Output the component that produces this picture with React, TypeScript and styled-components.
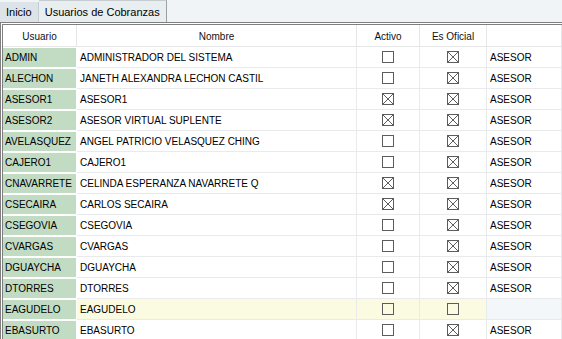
import React from 'react'
import styled, { createGlobalStyle, css } from 'styled-components'

const GlobalStyle = createGlobalStyle`
  html, body {
    margin: 0;
    padding: 0;
    background: #ffffff;
    overflow: hidden;
  }
  body {
    font-family: 'Liberation Sans', Arial, sans-serif;
    color: #000;
  }
`

const COLS = '74px 280px 63px 67px 1fr'

const Screen = styled.div`
  width: 562px;
  height: 339px;
  display: flex;
  flex-direction: column;
  overflow: hidden;
`

const TabBar = styled.div`
  height: 22px;
  display: flex;
  align-items: flex-end;
  background: #f1f4f6;
`

const Tab = styled.div<{ active?: boolean }>(
  props => css`
    display: flex;
    align-items: center;
    font-size: 11px;
    box-sizing: border-box;
    padding: 0 6px;
    height: ${props.active ? '22px' : '20px'};
    background: ${props.active ? '#e9eef1' : '#dde4e9'};
    border-right: 1px solid ${props.active ? '#9aa0a4' : '#c5cbcf'};
    border-top: ${props.active ? '1px solid #c5cbcf' : 'none'};
  `
)

const Frame = styled.div`
  flex: 1;
  display: flex;
  flex-direction: column;
  border-top: 3px double #7f7f7f;
  border-left: 3px double #7f7f7f;
`

const Row = styled.div<{ head?: boolean }>(
  props => css`
    display: grid;
    grid-template-columns: ${COLS};
    height: ${props.head ? '22px' : '21px'};
    flex-shrink: 0;
  `
)

const HeadCell = styled.div`
  display: flex;
  align-items: center;
  justify-content: center;
  padding-top: 2px;
  font-size: 10px;
  box-sizing: border-box;
  border-right: 1px solid #e4e6e8;
  border-bottom: 1px solid #e4e6e8;
  color: #111;
`

const Cell = styled.div<{ tone?: 'user' | 'hilite' | 'soft'; center?: boolean }>(
  props => css`
    display: flex;
    align-items: center;
    justify-content: ${props.center ? 'center' : 'flex-start'};
    padding-left: ${props.center ? '0' : '3px'};
    font-size: 10px;
    box-sizing: border-box;
    white-space: nowrap;
    overflow: hidden;
    border-right: 1px solid #e8eaec;
    border-bottom: 1px solid #e8eaec;
    background: ${props.tone === 'user'
      ? '#c2dcc4'
      : props.tone === 'hilite'
      ? '#fbfbe1'
      : props.tone === 'soft'
      ? '#f4f7fa'
      : '#ffffff'};
    ${props.tone === 'user' &&
    css`
      border-right: 1px solid #ffffff;
      border-top: 1px solid #ffffff;
      border-bottom: 1px solid #ffffff;
      padding-left: 2px;
    `}
  `
)

const Check = ({ on }: { on: boolean }) => (
  <svg width="12" height="12" viewBox="0 0 12 12">
    <rect x="0.5" y="0.5" width="11" height="11" fill="none" stroke="#5c5c5c" />
    {on && <path d="M1 1 L11 11 M11 1 L1 11" stroke="#5c5c5c" strokeWidth="1" />}
  </svg>
)

type User = [string, string, boolean, boolean, string]

const users: User[] = [
  ['ADMIN', 'ADMINISTRADOR DEL SISTEMA', false, true, 'ASESOR'],
  ['ALECHON', 'JANETH ALEXANDRA LECHON CASTIL', false, true, 'ASESOR'],
  ['ASESOR1', 'ASESOR1', true, true, 'ASESOR'],
  ['ASESOR2', 'ASESOR VIRTUAL SUPLENTE', true, true, 'ASESOR'],
  ['AVELASQUEZ', 'ANGEL PATRICIO VELASQUEZ CHING', false, true, 'ASESOR'],
  ['CAJERO1', 'CAJERO1', false, true, 'ASESOR'],
  ['CNAVARRETE', 'CELINDA ESPERANZA NAVARRETE Q', true, true, 'ASESOR'],
  ['CSECAIRA', 'CARLOS SECAIRA', true, true, 'ASESOR'],
  ['CSEGOVIA', 'CSEGOVIA', false, true, 'ASESOR'],
  ['CVARGAS', 'CVARGAS', false, true, 'ASESOR'],
  ['DGUAYCHA', 'DGUAYCHA', false, true, 'ASESOR'],
  ['DTORRES', 'DTORRES', false, true, 'ASESOR'],
  ['EAGUDELO', 'EAGUDELO', false, false, ''],
  ['EBASURTO', 'EBASURTO', false, true, 'ASESOR'],
]

export default function App() {
  return (
    <Screen>
      <GlobalStyle />
      <TabBar>
        <Tab>Inicio</Tab>
        <Tab active>Usuarios de Cobranzas</Tab>
      </TabBar>
      <Frame>
        <Row head>
          <HeadCell>Usuario</HeadCell>
          <HeadCell>Nombre</HeadCell>
          <HeadCell>Activo</HeadCell>
          <HeadCell>Es Oficial</HeadCell>
          <HeadCell />
        </Row>
        {users.map(([user, name, activo, oficial, rol]) => {
          const hi = user === 'EAGUDELO'
          return (
            <Row key={user}>
              <Cell tone="user">{user}</Cell>
              <Cell tone={hi ? 'hilite' : undefined}>{name}</Cell>
              <Cell center tone={hi ? 'hilite' : undefined}>
                <Check on={activo} />
              </Cell>
              <Cell center tone={hi ? 'hilite' : undefined}>
                <Check on={oficial} />
              </Cell>
              <Cell tone={hi ? 'soft' : undefined}>{rol}</Cell>
            </Row>
          )
        })}
      </Frame>
    </Screen>
  )
}
